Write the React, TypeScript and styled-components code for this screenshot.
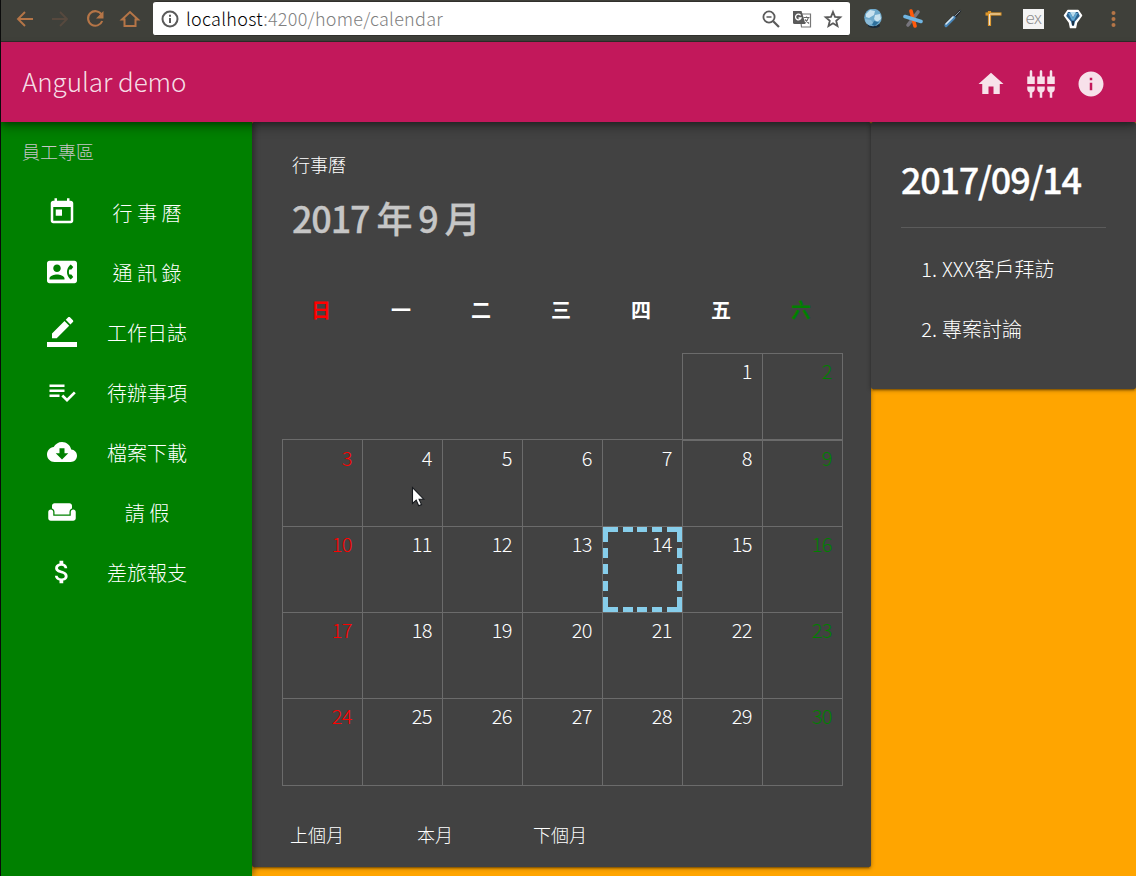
import React from "react";
import styled, { createGlobalStyle, css } from "styled-components";

const GlobalStyle = createGlobalStyle`
  * { box-sizing: border-box; }
  html, body { margin: 0; padding: 0; background: #ffa500; }
  body {
    font-family: "Noto Sans CJK TC", "Noto Sans", sans-serif;
    font-weight: 300;
    color: #fff;
    overflow: hidden;
  }
`;

const Window = styled.div`
  width: 1136px;
  height: 876px;
  display: flex;
  flex-direction: column;
  border-left: 1px solid #0b0b0b;
  background: #ffa500;
  overflow: hidden;
`;

/* Browser chrome */
const BrowserBar = styled.div`
  height: 42px;
  flex: none;
  display: flex;
  align-items: flex-start;
  background: #3f403a;
  border-bottom: 1px solid #2d2d29;
`;

const NavButtons = styled.div`
  width: 152px;
  height: 37px;
  display: flex;
  align-items: center;
  padding-left: 13px;
  gap: 13px;
`;

const AddressField = styled.div`
  width: 697px;
  height: 35px;
  margin-top: 1px;
  display: flex;
  align-items: center;
  background: #fff;
  border: solid #30302c;
  border-width: 1px 0;
  border-radius: 3px;
  padding: 0 7px 0 8px;
`;

const Url = styled.span`
  flex: 1;
  padding: 0 0 2px 7px;
  font-size: 18px;
  line-height: 30px;
  letter-spacing: 0.28px;
  color: #808080;
  white-space: nowrap;
`;

const Host = styled.span`
  color: #000;
`;

const FieldActions = styled.div`
  display: flex;
  align-items: center;
  gap: 11px;
`;

const Extensions = styled.div`
  display: flex;
  align-items: center;
  height: 37px;
  padding-left: 13px;
  gap: 20px;
`;

const ExBadge = styled.span`
  width: 21px;
  height: 20px;
  margin-right: -1px;
  background: #f4f4f4;
  color: #8d8d8d;
  font-size: 17px;
  line-height: 15px;
  text-align: center;
  letter-spacing: -0.5px;
`;

/* Application toolbar */
const Toolbar = styled.header`
  height: 80px;
  flex: none;
  position: relative;
  z-index: 3;
  display: flex;
  align-items: center;
  justify-content: space-between;
  padding: 2px 30px 0 21px;
  background: #c2185b;
  color: rgba(255, 255, 255, 0.87);
  box-shadow: 0 3px 5px -1px rgba(0, 0, 0, 0.3), 0 6px 10px 0 rgba(0, 0, 0, 0.28);
`;

const Brand = styled.h1`
  margin: 0;
  padding-bottom: 4px;
  font-size: 26px;
  font-weight: 300;
  line-height: 40px;
  letter-spacing: -0.05px;
`;

const ToolbarActions = styled.div`
  display: flex;
  gap: 20px;
  padding-top: 2px;
`;

/* Body */
const Body = styled.div`
  flex: 1;
  min-height: 0;
  display: flex;
  align-items: flex-start;
`;

const Sidebar = styled.nav`
  width: 251px;
  align-self: stretch;
  flex: none;
  position: relative;
  z-index: 2;
  background: #008000;
  box-shadow: 2px 0 6px rgba(0, 0, 0, 0.4);
`;

const SidebarTitle = styled.div`
  padding: 17px 0 0 21px;
  height: 60px;
  font-size: 18px;
  line-height: 24px;
  color: #c6c6c6;
`;

const MenuItem = styled.a`
  height: 60px;
  display: flex;
  align-items: center;
  padding: 0 0 0 46px;
  font-size: 20px;
  line-height: 30px;
`;

const MenuLabel = styled.span`
  width: 140px;
  text-align: center;
  padding-top: 2px;
  white-space: pre;
`;

const Card = styled.section`
  background: #424242;
  border-radius: 2px;
  box-shadow: 0 3px 1px -2px rgba(0, 0, 0, 0.2), 0 2px 2px 0 rgba(0, 0, 0, 0.14),
    0 1px 5px 0 rgba(0, 0, 0, 0.3);
`;

const CalendarCard = styled(Card)`
  width: 619px;
  height: 745px;
  flex: none;
  padding: 29px 30px;
`;

const CardTitle = styled.div`
  padding-left: 10px;
  height: 26px;
  font-size: 18px;
  line-height: 26px;
`;

const MonthTitle = styled.h2`
  margin: 15px 0 0;
  padding-left: 10px;
  font-size: 36px;
  font-weight: 500;
  line-height: 50px;
  letter-spacing: -1.15px;
  color: #c6c6c6;
  -webkit-text-stroke: 0.3px #c6c6c6;
`;

const WeekdayRow = styled.div`
  display: grid;
  grid-template-columns: repeat(7, 80px);
  margin-top: 53px;
  height: 58px;
`;

type Tone = "sunday" | "saturday" | "plain";
const toneColor: Record<Tone, string> = { sunday: "#f00", saturday: "#008000", plain: "#fff" };

const Weekday = styled.div<{ $tone: Tone }>`
  text-align: center;
  font-size: 20px;
  font-weight: 700;
  line-height: 30px;
  padding-right: 2px;
  color: ${(p) => toneColor[p.$tone]};
`;

const Month = styled.div`
  width: 561px;
  border-bottom: 1px solid #6b6b6b;
  display: flex;
  flex-direction: column;
`;

const Week = styled.div<{ $height: number }>`
  display: grid;
  grid-template-columns: repeat(6, 80px) 81px;
  height: ${(p) => p.$height}px;
`;

const Day = styled.div<{ $tone: Tone; $thick?: boolean; $last?: boolean }>`
  display: flex;
  border: solid #6b6b6b;
  border-width: ${(p) => (p.$thick ? 2 : 1)}px ${(p) => (p.$last ? 1 : 0)}px 0 1px;
  color: ${(p) => toneColor[p.$tone]};
  font-size: 20px;
  line-height: 30px;
  letter-spacing: -0.8px;
`;

const EmptyDay = styled.div``;

const horizontalDashes =
  "linear-gradient(90deg, #87ceeb 15px, #424242 15px 20px, #87ceeb 20px 30px, #424242 30px 34px, #87ceeb 34px 44px, #424242 44px 49px, #87ceeb 49px 59px, #424242 59px 64px, #87ceeb 64px)";
const verticalDashes =
  "linear-gradient(180deg, #87ceeb 15px, #424242 15px 21px, #87ceeb 21px 31px, #424242 31px 37px, #87ceeb 37px 47px, #424242 47px 54px, #87ceeb 54px 64px, #424242 64px 70px, #87ceeb 70px)";

const DayNumber = styled.div<{ $today?: boolean; $raised?: boolean }>`
  flex: 1;
  text-align: right;
  padding: ${(p) => (p.$raised ? 2 : 3)}px 10.4px 0 0;
  ${(p) =>
    p.$today &&
    css`
      background-image: ${horizontalDashes}, ${horizontalDashes}, ${verticalDashes}, ${verticalDashes};
      background-position: left top, left bottom, left top, right top;
      background-size: 100% 5px, 100% 5px, 5px 100%, 5px 100%;
      background-repeat: no-repeat;
    `}
`;

const MonthNav = styled.div`
  display: flex;
  margin-top: 34px;
  padding-left: 8px;
  gap: 73px;
  font-size: 18px;
  line-height: 28px;
`;

const MonthButton = styled.button<{ $shift?: number }>`
  font: inherit;
  color: inherit;
  background: none;
  border: 0;
  padding: 0;
  margin-right: ${(p) => p.$shift ?? 0}px;
`;

const AgendaCard = styled(Card)`
  flex: 1;
  height: 267px;
  padding: 30px;
`;

const AgendaDate = styled.h2`
  margin: 0;
  height: 76px;
  padding-top: 1px;
  border-bottom: 1px solid #5b5b5b;
  font-size: 36px;
  font-weight: 500;
  line-height: 50px;
  letter-spacing: -1.25px;
  -webkit-text-stroke: 0.3px #fff;
  white-space: nowrap;
`;

const AgendaList = styled.ol`
  list-style: none;
  margin: 10px 0 0;
  padding: 0;
`;

const AgendaItem = styled.li`
  height: 60px;
  display: flex;
  align-items: center;
  font-size: 20px;
  white-space: nowrap;
`;

const AgendaIndex = styled.span`
  width: 41px;
  padding-right: 5px;
  text-align: right;
`;

const Pointer = styled.svg`
  position: absolute;
  left: 411px;
  top: 486px;
  z-index: 5;
`;

const paths = {
  today: "M19 3h-1V1h-2v2H8V1H6v2H5c-1.110 0-1.990.9-1.990 2L3 19c0 1.100.890 2 2 2h14c1.100 0 2-.9 2-2V5c0-1.100-.9-2-2-2zm0 16H5V8h14v11zM7 10h5v5H7z",
  contact: "M22 3H2C.9 3 0 3.9 0 5v14c0 1.1.9 2 2 2h20c1.1 0 1.99-.9 1.99-2L24 5c0-1.1-.9-2-2-2zM8 6c1.66 0 3 1.34 3 3s-1.34 3-3 3-3-1.34-3-3 1.34-3 3-3zm6 12H2v-1c0-2 4-3.1 6-3.1s6 1.1 6 3.1v1zm3.85-4h1.64L21 16l-1.99 1.99c-1.31-.98-2.28-2.38-2.73-3.99-.18-.64-.28-1.31-.28-2s.1-1.36.28-2c.45-1.62 1.42-3.01 2.73-3.99L21 8l-1.51 2h-1.64c-.22.63-.35 1.3-.35 2s.13 1.37.35 2z",
  pencil: "M17.75 7L14 3.25l-10 10V17h3.75l10-10zm2.96-2.96c.39-.39.39-1.02 0-1.41L18.37.29c-.39-.39-1.02-.39-1.41 0L15 2.25 18.75 6l1.96-1.96zM0 20h24v4H0z",
  checklist: "M14 10H2v2h12v-2zm0-4H2v2h12V6zM2 16h8v-2H2v2zm19.5-4.5L23 13l-6.99 7-4.51-4.5L13 14l3.01 3 5.49-5.5z",
  cloud: "M19.35 10.04C18.67 6.59 15.64 4 12 4 9.11 4 6.6 5.64 5.35 8.04 2.34 8.36 0 10.91 0 14c0 3.31 2.69 6 6 6h13c2.76 0 5-2.24 5-5 0-2.64-2.05-4.78-4.65-4.96zM17 13l-5 5-5-5h3V9h4v4h3z",
  sofa: "M21 10c-1.1 0-2 .9-2 2v3H5v-3c0-1.1-.9-2-2-2s-2 .9-2 2v5c0 1.1.9 2 2 2h18c1.1 0 2-.9 2-2v-5c0-1.1-.9-2-2-2zm-3-5H6c-1.1 0-2 .9-2 2v2.15c1.16.41 2 1.51 2 2.82V14h12v-2.03c0-1.3.84-2.4 2-2.82V7c0-1.1-.9-2-2-2z",
  money: "M11.8 10.9c-2.27-.59-3-1.2-3-2.15 0-1.09 1.01-1.85 2.7-1.85 1.78 0 2.44.85 2.5 2.1h2.21c-.07-1.72-1.12-3.3-3.21-3.81V3h-3v2.16c-1.94.42-3.5 1.68-3.5 3.61 0 2.31 1.91 3.46 4.7 4.13 2.5.6 3 1.48 3 2.41 0 .69-.49 1.79-2.7 1.79-2.06 0-2.87-.92-2.98-2.1h-2.2c.12 2.19 1.76 3.42 3.68 3.83V21h3v-2.15c1.95-.37 3.5-1.5 3.5-3.55 0-2.84-2.43-3.81-4.7-4.4z",
  home: "M10 20v-6h4v6h5v-8h3L12 3 2 12h3v8z",
  inputs: "M5 2c0-.55-.45-1-1-1s-1 .45-1 1v4H1v6h6V6H5V2zm4 14c0 1.3.84 2.4 2 2.82V23h2v-4.18c1.16-.41 2-1.51 2-2.82v-2H9v2zm-8 0c0 1.3.84 2.4 2 2.82V23h2v-4.18C6.16 18.4 7 17.3 7 16v-2H1v2zM21 6V2c0-.55-.45-1-1-1s-1 .45-1 1v4h-2v6h6V6h-2zm-8-4c0-.55-.45-1-1-1s-1 .45-1 1v4H9v6h6V6h-2V2zm4 14c0 1.3.84 2.4 2 2.82V23h2v-4.18c1.16-.41 2-1.51 2-2.82v-2h-6v2z",
  info: "M12 2C6.48 2 2 6.48 2 12s4.48 10 10 10 10-4.48 10-10S17.52 2 12 2zm1 15h-2v-6h2v6zm0-8h-2V7h2v2z",
};

const Icon = ({ name }: { name: keyof typeof paths }) => (
  <svg width="30" height="30" viewBox="0 0 24 24" fill="currentColor">
    <path d={paths[name]} />
  </svg>
);

const menu: { icon: keyof typeof paths; label: string }[] = [
  { icon: "today", label: "行 事 曆" },
  { icon: "contact", label: "通 訊 錄" },
  { icon: "pencil", label: "工作日誌" },
  { icon: "checklist", label: "待辦事項" },
  { icon: "cloud", label: "檔案下載" },
  { icon: "sofa", label: "請 假" },
  { icon: "money", label: "差旅報支" },
];

const weekdays = ["日", "一", "二", "三", "四", "五", "六"];
const rowHeights = [86, 87, 86, 86, 87];
const weeks = rowHeights.map((_, w) => weekdays.map((_, d) => w * 7 + d - 4));
const today = 14;
const agenda = ["XXX客戶拜訪", "專案討論"];

const toneOf = (column: number): Tone =>
  column === 0 ? "sunday" : column === 6 ? "saturday" : "plain";

function BrowserNav() {
  return (
    <NavButtons>
      <svg width="22" height="20" viewBox="0 0 22 20" fill="none" stroke="#b57547" strokeWidth="1.9">
        <path d="M19 10H4M11 3L4 10l7 7" />
      </svg>
      <svg width="22" height="20" viewBox="0 0 22 20" fill="none" stroke="#57493e" strokeWidth="1.9">
        <path d="M3 10h15M11 3l7 7-7 7" />
      </svg>
      <svg width="22" height="20" viewBox="0 0 22 20" fill="none" stroke="#b57547" strokeWidth="2.1">
        <path d="M17.5 5.5A7.3 7.3 0 1 0 18.2 12" />
        <path d="M19.500 2v7.500H12z" fill="#b57547" stroke="none" />
      </svg>
      <svg width="22" height="20" viewBox="0 0 22 20" fill="none" stroke="#b57547" strokeWidth="2">
        <path d="M3 10.5L11 3l8 7.5h-2.5V17h-11v-6.500z" />
      </svg>
    </NavButtons>
  );
}

function BrowserExtensions() {
  return (
    <Extensions>
      <svg width="20" height="20" viewBox="0 0 20 20">
        <ellipse cx="11" cy="16.500" rx="6" ry="2.500" fill="#182838" />
        <circle cx="10" cy="8.500" r="8.800" fill="#6fa9cb" />
        <path d="M3 5l4-4 5 1-1 4-5 3-3-1zM12 6l5-1 1 5-4 3-3-3z" fill="#c9e2ef" />
        <path d="M2 10l6 1 2 3-4 2-3-2z" fill="#8abbd8" />
        <path d="M11 12l5 1-4 4-3-1z" fill="#2d6f9c" />
      </svg>
      <svg width="20" height="20" viewBox="0 0 20 20" strokeWidth="3.600" strokeLinecap="round">
        <path d="M15 3L5 16" stroke="#77757d" />
        <path d="M8 2l4 15" stroke="#ff5a0c" />
        <path d="M2 7.500l16 5" stroke="#70b5e2" />
      </svg>
      <svg width="20" height="20" viewBox="0 0 20 20" strokeLinecap="round">
        <path d="M11 9l6-7" stroke="#23282e" strokeWidth="2.500" />
        <path d="M12 7l5-5" stroke="#8a949b" strokeWidth="1" />
        <path d="M3 16.500l8-8" stroke="#4886b9" strokeWidth="3.200" />
        <path d="M3 15l7-7" stroke="#d8e8f2" strokeWidth="1.600" />
      </svg>
      <svg width="20" height="20" viewBox="0 0 20 20" fill="none">
        <path d="M6.500 2v15" stroke="#dc9427" strokeWidth="3.200" />
        <path d="M2.500 5h16" stroke="#dc9427" strokeWidth="3.200" />
        <path d="M7 5h10.500M6.500 5v11" stroke="#e6dfd2" strokeWidth="1.200" />
      </svg>
      <ExBadge>ex</ExBadge>
      <svg width="20" height="20" viewBox="0 0 20 20">
        <path d="M5 1.500h10l3.500 5-5 7-1 5h-5l-1-5-5-7z" fill="#fff" stroke="#fff" strokeWidth="1.500" strokeLinejoin="round" />
        <path d="M5 3h10l1.800 4-4.800 5.500-1 4H9l-1-4L3.200 7z" fill="#2b5f8b" />
        <path d="M5 4h2.500l2.500 5 2.500-5H15l-4 7.500H9z" fill="#5fa6d2" />
        <path d="M7 3h6l-3 5.500z" fill="#b9dcee" />
        <path d="M9 12h2v4.500H9z" fill="#183248" />
      </svg>
      <svg width="20" height="20" viewBox="0 0 20 20" fill="#b57547">
        <circle cx="10.500" cy="4" r="2" />
        <circle cx="10.500" cy="10" r="2" />
        <circle cx="10.500" cy="16" r="2" />
      </svg>
    </Extensions>
  );
}

export default function App() {
  return (
    <>
      <GlobalStyle />
      <Window>
        <BrowserBar>
          <BrowserNav />
          <AddressField>
            <svg width="18" height="18" viewBox="0 0 18 18" fill="none" stroke="#5a5a5a" strokeWidth="2">
              <circle cx="9" cy="9" r="7.500" />
              <path d="M9 8v5M9 4.800v2" />
            </svg>
            <Url>
              <Host>localhost</Host>:4200/home/calendar
            </Url>
            <FieldActions>
              <svg width="20" height="20" viewBox="0 0 20 20" fill="none" stroke="#5a5a5a" strokeWidth="1.800">
                <circle cx="8" cy="8" r="5.600" />
                <path d="M5.500 8h5" strokeWidth="1.500" />
                <path d="M12.200 12.200L18 18" strokeWidth="2.200" />
              </svg>
              <svg width="20" height="20" viewBox="0 0 20 20">
                <path d="M8 5h10.500v13H9.500z" fill="#fff" stroke="#777" strokeWidth="1.200" />
                <path d="M1 2h8.500l4 13H2.500Q1 15 1 13.500z" fill="#5a5a5a" />
                <path d="M8.600 6.300A2.800 2.800 0 1 0 9 9H6.500" fill="none" stroke="#fff" strokeWidth="1.300" />
                <path d="M11.500 8.500h6M14.500 7.500v1M16.300 8.800Q15.500 12 12.500 14M13 10.500l4 4" fill="none" stroke="#666" strokeWidth="1.100" />
              </svg>
              <svg width="20" height="20" viewBox="0 0 20 20" fill="none" stroke="#5a5a5a" strokeWidth="1.800">
                <path d="M10 3l2 4.900 5.300.4-4.100 3.500 1.300 5.200L10 14.200 5.500 17l1.300-5.200-4.100-3.500 5.300-.4z" />
              </svg>
            </FieldActions>
          </AddressField>
          <BrowserExtensions />
        </BrowserBar>

        <Toolbar>
          <Brand>Angular demo</Brand>
          <ToolbarActions>
            <Icon name="home" />
            <Icon name="inputs" />
            <Icon name="info" />
          </ToolbarActions>
        </Toolbar>

        <Body>
          <Sidebar>
            <SidebarTitle>員工專區</SidebarTitle>
            {menu.map((item) => (
              <MenuItem key={item.label}>
                <Icon name={item.icon} />
                <MenuLabel>{item.label}</MenuLabel>
              </MenuItem>
            ))}
          </Sidebar>

          <CalendarCard>
            <CardTitle>行事曆</CardTitle>
            <MonthTitle>2017 年 9 月</MonthTitle>
            <WeekdayRow>
              {weekdays.map((label, column) => (
                <Weekday key={label} $tone={toneOf(column)}>
                  {label}
                </Weekday>
              ))}
            </WeekdayRow>
            <Month>
              {weeks.map((days, row) => (
                <Week key={row} $height={rowHeights[row]}>
                  {days.map((day, column) =>
                    day < 1 ? (
                      <EmptyDay key={column} />
                    ) : (
                      <Day
                        key={column}
                        $tone={toneOf(column)}
                        $thick={row === 1 && column > 4}
                        $last={column === 6}
                      >
                        <DayNumber $today={day === today} $raised={row !== 1 || column > 4}>
                          {day}
                        </DayNumber>
                      </Day>
                    )
                  )}
                </Week>
              ))}
            </Month>
            <MonthNav>
              <MonthButton>上個月</MonthButton>
              <MonthButton $shift={7}>本月</MonthButton>
              <MonthButton>下個月</MonthButton>
            </MonthNav>
          </CalendarCard>

          <AgendaCard>
            <AgendaDate>2017/09/14</AgendaDate>
            <AgendaList>
              {agenda.map((text, i) => (
                <AgendaItem key={text}>
                  <AgendaIndex>{i + 1}.</AgendaIndex>
                  {text}
                </AgendaItem>
              ))}
            </AgendaList>
          </AgendaCard>
        </Body>
      </Window>
      <Pointer width="14" height="22" viewBox="0 0 14 22">
        <path d="M1.500 1.500v16l3.700-3.300 2.500 5.600 2.800-1.200-2.400-5.400h4.700z" fill="#fff" stroke="#16191d" strokeWidth="1.100" />
      </Pointer>
    </>
  );
}
